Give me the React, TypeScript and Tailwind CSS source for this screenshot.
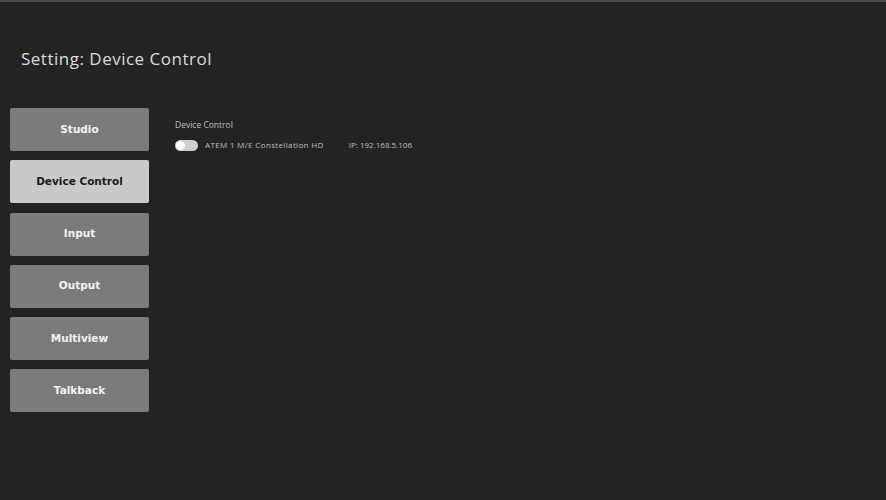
import React from "react";

const items = ["Studio", "Device Control", "Input", "Output", "Multiview", "Talkback"];

export default function App() {
  return (
    <div
      className="w-[886px] h-[500px] bg-[#232323] border-t-2 border-[#4a4a4a] flex flex-col overflow-hidden"
      style={{ fontFamily: "'Open Sans', 'Noto Sans', sans-serif" }}
    >
      <div className="pl-[21px] pt-[45px] h-[106px]">
        <h1 className="text-[17px] leading-[24px] text-[#dcdcdc] tracking-[0.5px]">Setting: Device Control</h1>
      </div>
      <div className="flex flex-1">
        <div className="flex flex-col gap-[9.25px] pl-[10px] w-[163px]">
          {items.map((it) => {
            const active = it === "Device Control";
            return (
              <div
                key={it}
                className={`w-[139px] h-[43px] rounded-[2px] flex items-center justify-center text-[10.5px] font-bold ${
                  active ? "bg-[#c9c9c9] text-[#1a1a1a]" : "bg-[#7b7b7b] text-[#f4f4f4]"
                }`}
                style={{ fontFamily: "'DejaVu Sans', 'Open Sans', sans-serif" }}
              >
                {it}
              </div>
            );
          })}
        </div>
        <div className="flex-1 border-l border-[#262626] pl-[11px] pt-[11px]">
          <div className="text-[8.5px] leading-[12px] text-[#bdbdbd]">Device Control</div>
          <div className="flex items-center mt-[8px] text-[8px] text-[#bdbdbd]">
            <div className="w-[23px] h-[11px] rounded-full bg-[#cfcfcf] relative">
              <div className="absolute left-[1px] top-[1px] w-[9px] h-[9px] rounded-full bg-white" />
            </div>
            <span className="ml-[7px] tracking-[0.35px]">ATEM 1 M/E Constellation HD</span>
            <span className="ml-[25px]">IP: 192.168.5.106</span>
          </div>
        </div>
      </div>
    </div>
  );
}
